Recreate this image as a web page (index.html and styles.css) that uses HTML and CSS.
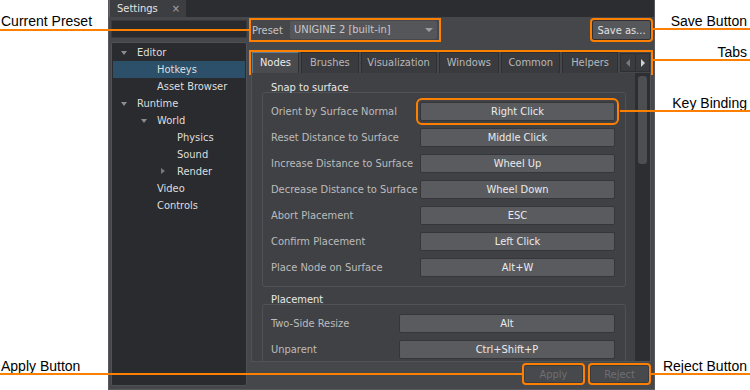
FILE: index.html
```html
<!DOCTYPE html>
<html lang="en">
<head>
    <meta charset="UTF-8">
    <title>Settings - Hotkeys</title>
    <link rel="stylesheet" href="styles.css">
</head>
<body>
    <div class="stage">
        <div class="window">
            <div class="titlebar">
                <div class="doc-tab">Settings <span class="close">×</span></div>
            </div>

            <div class="window-body">
                <!-- left: search + tree -->
                <aside class="sidebar">
                    <div class="search"></div>
                    <ul class="tree">
                        <li class="node lvl0"><span class="arrow down"></span>Editor</li>
                        <li class="node lvl1 selected"><span class="arrow"></span>Hotkeys</li>
                        <li class="node lvl1"><span class="arrow"></span>Asset Browser</li>
                        <li class="node lvl0"><span class="arrow down"></span>Runtime</li>
                        <li class="node lvl1"><span class="arrow down"></span>World</li>
                        <li class="node lvl2"><span class="arrow"></span>Physics</li>
                        <li class="node lvl2"><span class="arrow"></span>Sound</li>
                        <li class="node lvl2"><span class="arrow right"></span>Render</li>
                        <li class="node lvl1"><span class="arrow"></span>Video</li>
                        <li class="node lvl1"><span class="arrow"></span>Controls</li>
                    </ul>
                </aside>

                <!-- right: preset, tabs, bindings -->
                <main class="main">
                    <div class="preset-row">
                        <div class="preset callout">
                            <span class="preset-label">Preset</span>
                            <div class="combo">UNIGINE 2 [built-in]<span class="combo-arrow"></span></div>
                        </div>
                        <button class="btn save callout">Save as...</button>
                    </div>

                    <div class="tabs callout">
                        <div class="tab active">Nodes</div>
                        <div class="tab">Brushes</div>
                        <div class="tab">Visualization</div>
                        <div class="tab">Windows</div>
                        <div class="tab">Common</div>
                        <div class="tab">Helpers</div>
                        <div class="tab-scroll">
                            <span class="scroll-btn"><span class="tri-left"></span></span>
                            <span class="scroll-btn"><span class="tri-right"></span></span>
                        </div>
                    </div>

                    <div class="panel">
                        <div class="panel-scroll">
                            <div class="group">
                                <div class="group-title">Snap to surface</div>
                                <div class="group-box">
                                    <div class="row"><span class="label">Orient by Surface Normal</span><button class="key callout-key">Right Click</button></div>
                                    <div class="row"><span class="label">Reset Distance to Surface</span><button class="key">Middle Click</button></div>
                                    <div class="row"><span class="label">Increase Distance to Surface</span><button class="key">Wheel Up</button></div>
                                    <div class="row"><span class="label">Decrease Distance to Surface</span><button class="key">Wheel Down</button></div>
                                    <div class="row"><span class="label">Abort Placement</span><button class="key">ESC</button></div>
                                    <div class="row"><span class="label">Confirm Placement</span><button class="key">Left Click</button></div>
                                    <div class="row"><span class="label">Place Node on Surface</span><button class="key">Alt+W</button></div>
                                </div>
                            </div>
                            <div class="group narrow">
                                <div class="group-title">Placement</div>
                                <div class="group-box open">
                                    <div class="row"><span class="label">Two-Side Resize</span><button class="key">Alt</button></div>
                                    <div class="row"><span class="label">Unparent</span><button class="key">Ctrl+Shift+P</button></div>
                                </div>
                            </div>
                        </div>
                        <div class="scrollbar"><div class="thumb"></div></div>
                    </div>

                    <div class="footer">
                        <button class="btn disabled callout">Apply</button>
                        <button class="btn disabled callout">Reject</button>
                    </div>
                </main>
            </div>
        </div>

        <!-- annotation callouts over the screenshot -->
        <div class="note left" style="top: 13px;">Current Preset</div>
        <div class="line" style="top: 29px; left: 0; width: 250px;"></div>

        <div class="note left" style="top: 358px;">Apply Button</div>
        <div class="line" style="top: 373px; left: 0; width: 523px;"></div>

        <div class="note right" style="top: 13px;">Save Button</div>
        <div class="line" style="top: 28px; left: 653px; width: 97px;"></div>

        <div class="note right" style="top: 44px;">Tabs</div>
        <div class="line" style="top: 59px; left: 653px; width: 97px;"></div>

        <div class="note right" style="top: 95px;">Key Binding</div>
        <div class="line" style="top: 110px; left: 620px; width: 130px;"></div>

        <div class="note right" style="top: 358px;">Reject Button</div>
        <div class="line" style="top: 373px; left: 650px; width: 100px;"></div>
    </div>
</body>
</html>
```

FILE: styles.css
```css
* {
    box-sizing: border-box;
}

body {
    margin: 0;
    background: #ffffff;
    font-family: 'DejaVu Sans Condensed', 'Liberation Sans', sans-serif;
    font-size: 11px;
}

ul {
    margin: 0;
    padding: 0;
    list-style: none;
}

button {
    font-family: inherit;
    font-size: 11px;
    margin: 0;
    padding: 0;
}

.stage {
    position: relative;
    width: 750px;
    height: 390px;
    overflow: hidden;
}

/* window */
.window {
    margin-left: 108px;
    width: 547px;
    height: 390px;
    display: flex;
    flex-direction: column;
    background: #46474b;
    border-left: 1px solid #58595d;
    border-right: 1px solid #58595d;
    border-bottom: 1px solid #58595d;
}

.titlebar {
    height: 17px;
    background: #2c2d30;
    display: flex;
}

.doc-tab {
    width: 77px;
    height: 17px;
    background: #3c3e42;
    border-left: 1px solid #4d6e86;
    color: #e4e4e4;
    line-height: 17px;
    padding: 0 6px 0 7px;
    display: flex;
    justify-content: space-between;
}

.close {
    color: #a8a8a8;
}

.window-body {
    flex: 1;
    display: flex;
    gap: 3px;
    padding: 3px 3px 3px 2px;
    min-height: 0;
}

/* sidebar */
.sidebar {
    width: 136px;
    display: flex;
    flex-direction: column;
    gap: 4px;
}

.search {
    height: 18px;
    background: #2a2b2e;
    border: 1px solid #38393c;
}

.tree {
    flex: 1;
    background: #2a2b2e;
    border: 1px solid #505155;
    border-radius: 2px;
    padding: 1px;
}

.node {
    height: 17px;
    line-height: 17px;
    color: #dedede;
    display: flex;
    align-items: center;
    white-space: nowrap;
}

.node.selected {
    background: #2c5069;
}

.lvl0 { padding-left: 7px; }
.lvl1 { padding-left: 27px; }
.lvl2 { padding-left: 47px; }

.arrow {
    width: 17px;
    height: 17px;
    position: relative;
    flex-shrink: 0;
}

.arrow.down::after {
    content: '';
    position: absolute;
    left: 1px;
    top: 7px;
    border-left: 3.5px solid transparent;
    border-right: 3.5px solid transparent;
    border-top: 4px solid #8c8d90;
}

.arrow.right::after {
    content: '';
    position: absolute;
    left: 1px;
    top: 5px;
    border-top: 3.5px solid transparent;
    border-bottom: 3.5px solid transparent;
    border-left: 4px solid #77787b;
}

/* main column */
.main {
    width: 401px;
    display: flex;
    flex-direction: column;
}

.callout {
    outline: 2px solid #ff7f00;
}

.preset-row {
    height: 20px;
    display: flex;
    align-items: center;
}

.preset {
    margin-left: 1px;
    width: 188px;
    height: 20px;
    display: flex;
    align-items: center;
    padding: 0 2px 0 1px;
}

.preset-label {
    color: #c4c4c4;
}

.combo {
    margin-left: auto;
    width: 147px;
    height: 18px;
    background: #55565a;
    border-radius: 2px;
    color: #c8c8c8;
    line-height: 18px;
    padding-left: 4px;
    position: relative;
}

.combo-arrow {
    position: absolute;
    right: 4px;
    top: 7px;
    border-left: 4px solid transparent;
    border-right: 4px solid transparent;
    border-top: 4px solid #9c9da0;
}

.btn {
    height: 20px;
    background: #56575b;
    border: 1px solid #2f3033;
    border-radius: 2px;
    color: #e2e2e2;
}

.save {
    margin-left: auto;
    width: 59px;
}

/* tabs */
.tabs {
    margin-top: 12px;
    margin-left: 1px;
    height: 21px;
    display: flex;
    gap: 2px;
    padding-left: 1px;
}

.tab {
    height: 21px;
    background: #3a3b3f;
    border: 1px solid #2e2f32;
    border-bottom: none;
    color: #b8b8b8;
    line-height: 19px;
    text-align: center;
    white-space: nowrap;
}

.tab.active {
    background: #4a4b4f;
    border-color: #55809c #2e2f32 #2e2f32 #55809c;
    color: #ececec;
}

.tab:nth-child(1) { width: 47px; }
.tab:nth-child(2) { width: 58px; }
.tab:nth-child(3) { width: 76px; }
.tab:nth-child(4) { width: 61px; }
.tab:nth-child(5) { width: 59px; }
.tab:nth-child(6) { width: 56px; }

.tab-scroll {
    margin-left: auto;
    margin-right: 1px;
    display: flex;
    align-items: center;
    height: 19px;
    margin-top: 1px;
    background: #3a3b3f;
    border: 1px solid #2e2f32;
}

.scroll-btn {
    width: 14px;
    height: 17px;
    display: flex;
    align-items: center;
    justify-content: center;
}

.scroll-btn + .scroll-btn {
    border-left: 1px solid #2e2f32;
}

.tri-left {
    border-top: 4px solid transparent;
    border-bottom: 4px solid transparent;
    border-right: 4px solid #77787b;
}

.tri-right {
    border-top: 4px solid transparent;
    border-bottom: 4px solid transparent;
    border-left: 4px solid #d2d2d2;
}

/* content panel */
.panel {
    flex: 1;
    display: flex;
    min-height: 0;
    margin-left: 1px;
    background: #404145;
    border: 1px solid #525357;
    border-top: none;
}

.panel-scroll {
    flex: 1;
    overflow: hidden;
    padding: 8px 9px 0 10px;
}

.group + .group {
    margin-top: 6px;
}

.group-title {
    color: #e8e8e8;
    line-height: 14px;
    padding-left: 9px;
    margin-bottom: -3px;
}

.group-box {
    border: 1px solid #515256;
    border-radius: 3px;
    padding: 9px 10px 9px 8px;
    display: flex;
    flex-direction: column;
    gap: 7px;
}

.group-box.open {
    padding-bottom: 40px;
}

.row {
    height: 19px;
    display: flex;
    align-items: center;
}

.label {
    width: 149px;
    color: #bcbcbc;
    white-space: nowrap;
}

.narrow .label {
    width: 128px;
}

.key {
    flex: 1;
    height: 19px;
    background: #5a5b5f;
    border: 1px solid #353639;
    border-radius: 2px;
    color: #ebebeb;
}

.callout-key {
    outline: 2px solid #ff7f00;
    outline-offset: 2px;
}

.scrollbar {
    width: 15px;
    background: #2d2e31;
    padding: 3px 3px 0 3px;
}

.thumb {
    height: 88px;
    background: #4d4e52;
    border-radius: 3px;
}

/* footer */
.footer {
    height: 24px;
    display: flex;
    justify-content: flex-end;
    gap: 7px;
    padding: 3px 2px 0 0;
}

.btn.disabled {
    width: 59px;
    height: 18px;
    background: #48494d;
    border-color: #3a3b3e;
    color: #6e6f72;
}

/* annotations */
.note {
    position: absolute;
    font-family: 'Liberation Sans', Arial, sans-serif;
    font-size: 14px;
    color: #000;
    line-height: 16px;
}

.note.left {
    left: 1px;
}

.note.right {
    right: 3px;
}

.line {
    position: absolute;
    height: 2px;
    background: #ff7f00;
}
```
